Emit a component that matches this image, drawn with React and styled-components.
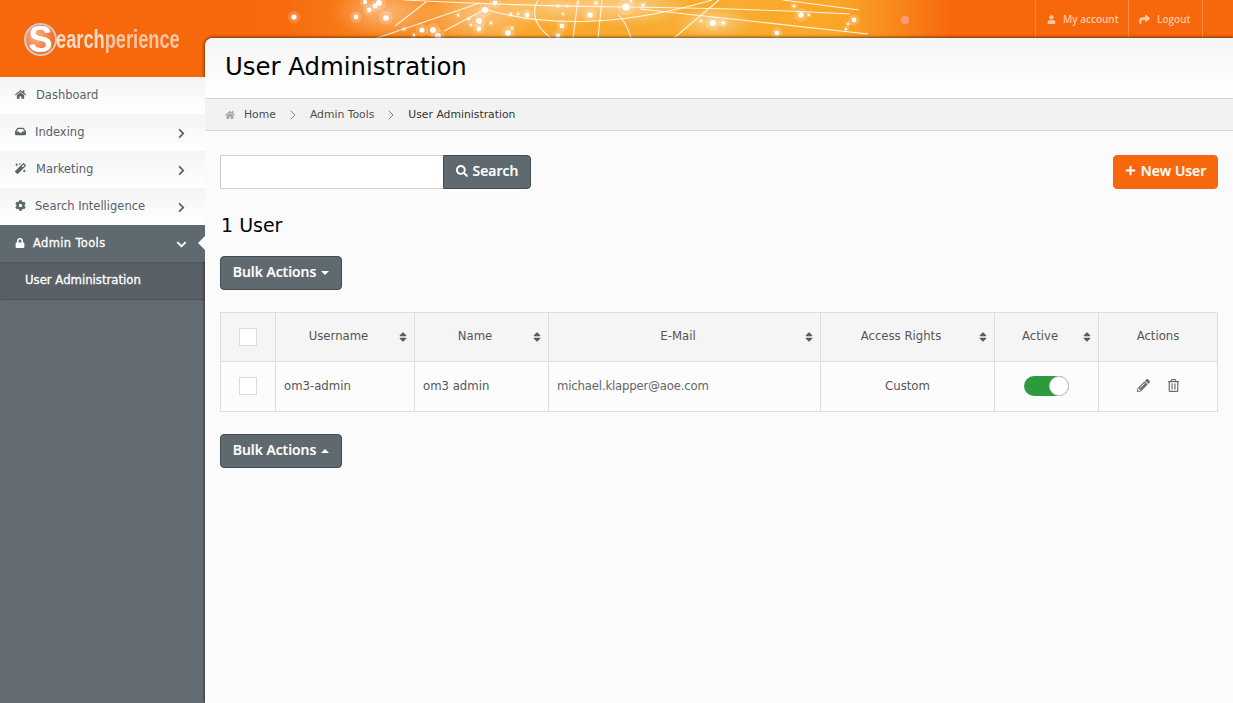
import React from 'react'
import styled, { createGlobalStyle } from 'styled-components'
import {
  FaHome,
  FaInbox,
  FaMagic,
  FaCog,
  FaLock,
  FaChevronRight,
  FaChevronDown,
  FaUser,
  FaShare,
  FaSearch,
  FaPlus,
  FaSort,
  FaPencilAlt,
  FaRegTrashAlt,
} from 'react-icons/fa'
import { ChevronRight } from 'lucide-react'

const GlobalStyle = createGlobalStyle`
  html, body {
    margin: 0;
    height: 100%;
    background: #fbfbfb;
    font-family: "DejaVu Sans", sans-serif;
  }
  * { box-sizing: border-box; }
`

const Page = styled.div`
  display: flex;
  width: 100%;
  height: 703px;
  overflow: hidden;
`

const Sidebar = styled.aside`
  display: flex;
  flex-direction: column;
  width: 205px;
  flex: none;
  background: #626c72;
`

const LogoBar = styled.div`
  display: flex;
  align-items: center;
  height: 77px;
  padding: 2px 0 0 24px;
  background: #f7670c;
`

const LogoBadge = styled.div`
  display: flex;
  align-items: center;
  justify-content: center;
  width: 33px;
  height: 33px;
  flex: none;
  border-radius: 50%;
  border: 2px solid #cfcac6;
  background: radial-gradient(circle at 35% 40%, #fbb18a, #ef6a25 75%);
  color: #fff;
  font: bold 36px/1 "Liberation Sans", sans-serif;
`

const LogoText = styled.div`
  margin-left: -1px;
  color: #fcdcc6;
  font: bold 25px/1 "Liberation Sans", sans-serif;
  transform-origin: left center;
  transform: scaleX(0.73);
  span { color: #f9c6a4; }
`

const MenuItem = styled.div`
  position: relative;
  display: flex;
  align-items: center;
  height: 37px;
  padding: 0 18px 2px 15px;
  font-size: 11.5px;
  color: ${({ $active }) => ($active ? '#fff' : '#56626b')};
  background: ${({ $active }) => ($active ? '#5f6a70' : 'linear-gradient(#f4f4f4, #ffffff)')};
  ${({ $active }) => $active && '-webkit-text-stroke: 0.3px #fff; letter-spacing: 0.35px;'}
  svg { flex: none; }
`

const MenuIcon = styled.span`
  display: flex;
  width: ${({ $w }) => $w || 20}px;
  color: ${({ $active }) => ($active ? '#fff' : '#5a646b')};
  font-size: 11px;
`

const MenuLabel = styled.span`
  flex: 1;
`

const MenuArrow = styled.span`
  display: flex;
  margin-top: 3px;
  font-size: 11px;
  color: ${({ $active }) => ($active ? '#fff' : '#55606a')};
`

const Notch = styled.span`
  position: absolute;
  right: 0;
  top: 11px;
  border: 7px solid transparent;
  border-left: 0;
  border-right-color: #fbfbfb;
`

const SubItem = styled.div`
  display: flex;
  align-items: center;
  height: 37px;
  padding: 0 0 2px 25px;
  color: #fff;
  font-size: 11.7px;
  -webkit-text-stroke: 0.3px #fff;
  background: #596167;
  box-shadow: inset 0 2px 2px -1px rgba(0, 0, 0, 0.15), 0 1px 1px rgba(0, 0, 0, 0.2);
`

const Main = styled.main`
  display: flex;
  flex-direction: column;
  flex: 1;
  min-width: 0;
  background: linear-gradient(#f7670c 77px, #626c72 77px);
`

const TopBar = styled.header`
  display: flex;
  height: 38px;
  flex: none;
  background: #f7670c;
`

const Banner = styled.svg`
  display: block;
  width: 830px;
  height: 38px;
  flex: none;
`

const TopLink = styled.a`
  display: flex;
  align-items: center;
  gap: 7px;
  width: ${({ $w }) => $w}px;
  height: 38px;
  padding-left: ${({ $pad }) => $pad}px;
  border-left: 1px solid #f98a44;
  color: #fbc7a3;
  font: 600 10px "Open Sans", sans-serif;
  ${({ $last }) => $last && 'border-right: 1px solid #f98a44;'}
`

const Panel = styled.section`
  display: flex;
  flex-direction: column;
  flex: 1;
  border-top-left-radius: 8px;
  background: #fbfbfb;
  box-shadow: 0 -1px 3px rgba(60, 30, 0, 0.55), -1px 0 3px rgba(0, 0, 0, 0.3);
  overflow: hidden;
`

const TitleBar = styled.div`
  height: 60px;
  flex: none;
  padding-left: 20px;
  background: linear-gradient(#f6f6f6, #ffffff);
`

const Title = styled.h1`
  margin: 0;
  font-size: 24.4px;
  font-weight: normal;
  line-height: 57px;
  color: #000;
`

const Crumbs = styled.nav`
  display: flex;
  align-items: center;
  height: 33px;
  flex: none;
  padding-left: 20px;
  background: #f2f2f2;
  border-top: 1px solid #d6d6d6;
  border-bottom: 1px solid #d9d9d9;
  color: #4a4a4a;
  font-size: 10.8px;
`

const Crumb = styled.span`
  color: ${({ $current }) => ($current ? '#333' : '#4d4d4d')};
`

const CrumbSep = styled(ChevronRight)`
  margin: 0 9px;
  color: #777;
`

const HomeIcon = styled(FaHome)`
  margin-right: 9px;
  color: #a3a3a3;
  font-size: 10px;
`

const Content = styled.div`
  padding: 24px 15px 0;
`

const Toolbar = styled.div`
  display: flex;
  justify-content: space-between;
`

const SearchForm = styled.div`
  display: flex;
`

const SearchInput = styled.input`
  width: 223px;
  height: 34px;
  border: 1px solid #ccc;
  border-right: 0;
  background: #fff;
  outline: none;
`

const Button = styled.button`
  display: inline-flex;
  align-items: center;
  justify-content: center;
  gap: ${({ $gap }) => $gap || 5}px;
  width: ${({ $w }) => $w}px;
  height: 34px;
  padding: 0 0 3px;
  border: 1px solid ${({ $primary }) => ($primary ? '#f4602a' : '#454c50')};
  border-radius: 4px;
  background: ${({ $primary }) => ($primary ? '#f7670c' : '#5f6a70')};
  color: #fff;
  font: 600 14px "Open Sans", sans-serif;
  -webkit-text-stroke: 0.2px #fff;
  ${({ $attached }) => $attached && 'border-top-left-radius: 0; border-bottom-left-radius: 0;'}
`

const Caret = styled.span`
  width: 0;
  height: 0;
  margin-top: 2px;
  border-left: 4px solid transparent;
  border-right: 4px solid transparent;
  ${({ $up }) => ($up ? 'border-bottom: 4px solid #fff;' : 'border-top: 4px solid #fff;')}
`

const Count = styled.h2`
  margin: 23px 0 17px;
  padding-left: 1px;
  font-size: 19px;
  font-weight: normal;
  line-height: 27px;
  color: #000;
`

const Table = styled.table`
  width: 997px;
  margin: 22px 0;
  border-collapse: collapse;
  table-layout: fixed;
  font-size: 11.7px;
  color: #555;
`

const HeadCell = styled.th`
  height: 49px;
  padding: ${({ $tick }) => ($tick ? '0 9px 0 8px' : '0 5px 2px 8px')};
  border: 1px solid #ddd;
  background: #f5f5f5;
  font-weight: normal;
  text-align: center;
`

const PlainHeadCell = styled(HeadCell)`
  padding: 0 0 2px;
`

const HeadInner = styled.div`
  display: flex;
  align-items: center;
  span { flex: 1; padding-right: 4px; }
  svg { flex: none; margin-top: 2px; font-size: 12px; color: #5c5c5c; }
`

const Cell = styled.td`
  height: 50px;
  padding: 0 8px 2px;
  border: 1px solid #ddd;
  background: #fcfcfc;
  text-align: ${({ $center }) => ($center ? 'center' : 'left')};
`

const EmailText = styled.span`
  letter-spacing: -0.17px;
  color: #666;
`

const CheckBox = styled.span`
  display: block;
  width: 18px;
  height: 18px;
  margin: 0 auto;
  border: 1px solid #ddd;
  background: #fff;
`

const Toggle = styled.span`
  display: inline-flex;
  justify-content: flex-end;
  width: 45px;
  height: 20px;
  vertical-align: middle;
  border-radius: 10px;
  background: #2e9a40;
`

const Knob = styled.span`
  width: 20px;
  height: 20px;
  border-radius: 50%;
  border: 1px solid #ccc;
  background: #fff;
`

const ActionIcons = styled.div`
  display: flex;
  justify-content: center;
  gap: 17px;
  color: #6e6e6e;
  font-size: 13px;
`

const menu = [
  { label: 'Dashboard', icon: FaHome, w: 21 },
  { label: 'Indexing', icon: FaInbox, w: 20, more: true },
  { label: 'Marketing', icon: FaMagic, w: 21, more: true },
  { label: 'Search Intelligence', icon: FaCog, w: 20, more: true },
]

const columns = [
  { label: 'Username', width: 139 },
  { label: 'Name', width: 134 },
  { label: 'E-Mail', width: 272 },
  { label: 'Access Rights', width: 174 },
  { label: 'Active', width: 104 },
]

const dots = [
  [294, 17, 2.6], [356, 17, 2.4], [386, 18, 2.8], [369, 10, 2.4], [375, 6, 2.4], [379, 3, 3], [365, 2, 2.2],
  [422, 30, 2.6], [433, 30, 3], [438, 36, 3], [404, 29, 1.2], [414, 35, 1.2], [458, 15, 1.2], [469, 19, 1.2],
  [479, 21, 3], [471, 25, 1.2], [479, 29, 2.4], [485, 10, 3], [491, 23, 1.2], [508, 33, 3], [512, 28, 1.2],
  [511, 14, 1.2], [518, 14, 1.2], [527, 15, 2.4], [495, 3, 2.4], [558, 36, 2.4], [562, 26, 2.4], [563, 14, 1],
  [590, 15, 2.8], [558, 6, 1], [567, 6, 1], [578, 3, 1], [596, 3, 1.6], [626, 7, 3.6], [643, 5, 1.6], [631, 1, 1.2],
  [701, 21, 1.2], [713, 23, 3], [723, 23, 2], [777, 33, 2.4], [794, 6, 1.6], [801, 15, 2.8], [809, 15, 1.2],
  [854, 20, 2.4], [848, 24, 1.2], [846, 29, 1.2],
]

const lines = [
  'M404 0 Q520 6 627 7 T850 14',
  'M377 38 L480 3',
  'M395 26 L426 2',
  'M444 31 L484 10',
  'M484 9 Q582 38 712 0',
  'M538 0 Q527 20 551 38',
  'M578 0 L573 38',
  'M602 0 L598 38',
  'M618 14 Q627 24 631 38',
  'M674 38 L719 0',
  'M640 9 L868 34',
  'M783 0 L859 10',
]

const hazes = [
  [385, 12, 55, 26],
  [480, 14, 60, 30],
  [560, 6, 70, 22],
  [630, 6, 60, 22],
  [713, 22, 40, 16],
]

function BannerArt() {
  return (
    <Banner viewBox="205 0 830 38" preserveAspectRatio="none">
      <defs>
        <linearGradient id="glow" x1="205" x2="1035" y1="0" y2="0" gradientUnits="userSpaceOnUse">
          <stop offset="0" stopColor="#f7670c" />
          <stop offset="0.09" stopColor="#f7690d" />
          <stop offset="0.2" stopColor="#f88018" />
          <stop offset="0.38" stopColor="#f9a62c" />
          <stop offset="0.6" stopColor="#f8ad30" />
          <stop offset="0.76" stopColor="#f9a729" />
          <stop offset="0.84" stopColor="#f8841a" />
          <stop offset="0.9" stopColor="#f7670c" />
        </linearGradient>
        <radialGradient id="haze">
          <stop offset="0" stopColor="#fff" stopOpacity="0.4" />
          <stop offset="1" stopColor="#fff" stopOpacity="0" />
        </radialGradient>
        <filter id="soft" x="-20%" y="-20%" width="140%" height="140%">
          <feGaussianBlur stdDeviation="0.4" />
        </filter>
      </defs>
      <rect x="205" y="0" width="830" height="38" fill="url(#glow)" />
      {hazes.map(([cx, cy, rx, ry]) => (
        <ellipse key={cx} cx={cx} cy={cy} rx={rx} ry={ry} fill="url(#haze)" />
      ))}
      <g filter="url(#soft)">
        {lines.map((d) => (
          <path key={d} d={d} fill="none" stroke="#fff" strokeWidth="1.1" opacity="0.85" />
        ))}
        {dots.map(([cx, cy, r]) => (
          <g key={`${cx}-${cy}`}>
            <circle cx={cx} cy={cy} r={r * 2.4} fill="#fff" opacity="0.18" />
            <circle cx={cx} cy={cy} r={r} fill="#fff" />
          </g>
        ))}
      </g>
      <circle cx="905" cy="20" r="4" fill="#fa9c78" />
    </Banner>
  )
}

export default function App() {
  return (
    <>
      <GlobalStyle />
      <Page>
        <Sidebar>
          <LogoBar>
            <LogoBadge>S</LogoBadge>
            <LogoText>
              earch<span>perience</span>
            </LogoText>
          </LogoBar>
          {menu.map(({ label, icon: Icon, w, more }) => (
            <MenuItem key={label}>
              <MenuIcon $w={w}>
                <Icon />
              </MenuIcon>
              <MenuLabel>{label}</MenuLabel>
              {more && (
                <MenuArrow>
                  <FaChevronRight />
                </MenuArrow>
              )}
            </MenuItem>
          ))}
          <MenuItem $active>
            <MenuIcon $w={18} $active>
              <FaLock size={10} />
            </MenuIcon>
            <MenuLabel>Admin Tools</MenuLabel>
            <MenuArrow $active>
              <FaChevronDown />
            </MenuArrow>
            <Notch />
          </MenuItem>
          <SubItem>User Administration</SubItem>
        </Sidebar>
        <Main>
          <TopBar>
            <BannerArt />
            <TopLink $w={93} $pad={11}>
              <FaUser size={9} />
              My account
            </TopLink>
            <TopLink $w={75} $pad={10} $last>
              <FaShare size={11} />
              Logout
            </TopLink>
          </TopBar>
          <Panel>
            <TitleBar>
              <Title>User Administration</Title>
            </TitleBar>
            <Crumbs>
              <HomeIcon />
              <Crumb>Home</Crumb>
              <CrumbSep size={16} strokeWidth={1.4} />
              <Crumb>Admin Tools</Crumb>
              <CrumbSep size={16} strokeWidth={1.4} />
              <Crumb $current>User Administration</Crumb>
            </Crumbs>
            <Content>
              <Toolbar>
                <SearchForm>
                  <SearchInput />
                  <Button $w={88} $attached>
                    <FaSearch size={12} />
                    Search
                  </Button>
                </SearchForm>
                <Button $w={105} $primary>
                  <FaPlus size={11} />
                  New User
                </Button>
              </Toolbar>
              <Count>1 User</Count>
              <Button $w={122} $gap={5}>
                Bulk Actions
                <Caret />
              </Button>
              <Table>
                <colgroup>
                  <col width="55" />
                  {columns.map((c) => (
                    <col key={c.label} width={c.width} />
                  ))}
                  <col width="119" />
                </colgroup>
                <thead>
                  <tr>
                    <HeadCell $tick>
                      <CheckBox />
                    </HeadCell>
                    {columns.map((c) => (
                      <HeadCell key={c.label}>
                        <HeadInner>
                          <span>{c.label}</span>
                          <FaSort />
                        </HeadInner>
                      </HeadCell>
                    ))}
                    <PlainHeadCell>Actions</PlainHeadCell>
                  </tr>
                </thead>
                <tbody>
                  <tr>
                    <Cell>
                      <CheckBox />
                    </Cell>
                    <Cell>om3-admin</Cell>
                    <Cell>om3 admin</Cell>
                    <Cell>
                      <EmailText>michael.klapper@aoe.com</EmailText>
                    </Cell>
                    <Cell $center>Custom</Cell>
                    <Cell $center>
                      <Toggle>
                        <Knob />
                      </Toggle>
                    </Cell>
                    <Cell>
                      <ActionIcons>
                        <FaPencilAlt />
                        <FaRegTrashAlt />
                      </ActionIcons>
                    </Cell>
                  </tr>
                </tbody>
              </Table>
              <Button $w={122} $gap={5}>
                Bulk Actions
                <Caret $up />
              </Button>
            </Content>
          </Panel>
        </Main>
      </Page>
    </>
  )
}
